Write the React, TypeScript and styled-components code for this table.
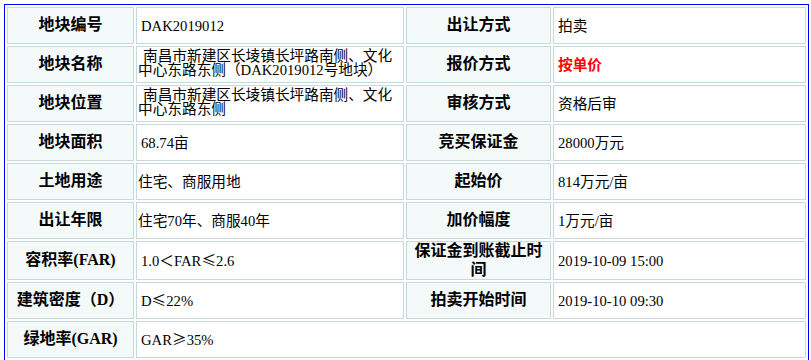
import React from "react";
import styled, { createGlobalStyle } from "styled-components";

const GlobalStyle = createGlobalStyle`
  html, body {
    margin: 0;
    padding: 0;
    background: #ffffff;
  }
  body {
    font-family: "Liberation Serif", "Noto Sans CJK SC", serif;
    color: #000000;
  }
`;

const Page = styled.div`
  padding: 4px;
`;

const Sheet = styled.div`
  box-sizing: border-box;
  width: 805px;
  display: grid;
  grid-template-columns: 127px 268px 145px 253px;
  grid-auto-rows: minmax(37px, auto);
  gap: 2px;
  padding: 2px;
  border: 1px solid #0000ff;
  background: #ffffff;
`;

const Cell = styled.div`
  box-sizing: border-box;
  border: 1px solid #c6dada;
  display: flex;
  align-items: center;
  min-width: 0;
`;

const LabelCell = styled(Cell)`
  background: #f4fafa;
  justify-content: center;
  text-align: center;
  font-family: "Liberation Serif", "Noto Sans CJK SC", serif;
  font-weight: 700;
  font-size: 16px;
  line-height: 18.5px;
`;

const ValueCell = styled(Cell)<{ $span?: boolean; $right?: boolean; $indent?: number; $lift?: boolean }>`
  background: #ffffff;
  grid-column: ${(p) => (p.$span ? "span 3" : "auto")};
  padding: ${(p) => (p.$lift ? "0 0 3px" : "0")} ${(p) => (p.$right ? "4px" : "1px")};
  font-size: 14.67px;
  line-height: 14px;
  text-indent: ${(p) => p.$indent ?? 0}px;
  font-family: "Liberation Serif", "Noto Sans CJK SC", serif;
`;

const Accent = styled.span`
  color: #ff0000;
  font-weight: 700;
`;

const Sym = styled.span`
  font-family: "Noto Sans CJK SC", sans-serif;
`;

type Row = {
  label: string;
  value: React.ReactNode;
  indent?: number;
  lift?: boolean;
  label2?: string;
  value2?: React.ReactNode;
};

const rows: Row[] = [
  { label: "地块编号", value: "DAK2019012", indent: 3, label2: "出让方式", value2: "拍卖" },
  {
    label: "地块名称",
    value: "南昌市新建区长堎镇长坪路南侧、文化中心东路东侧（DAK2019012号地块）",
    indent: 5,
    lift: true,
    label2: "报价方式",
    value2: <Accent>按单价</Accent>,
  },
  {
    label: "地块位置",
    value: "南昌市新建区长堎镇长坪路南侧、文化中心东路东侧",
    indent: 5,
    lift: true,
    label2: "审核方式",
    value2: "资格后审",
  },
  { label: "地块面积", value: "68.74亩", indent: 3, label2: "竞买保证金", value2: "28000万元" },
  { label: "土地用途", value: "住宅、商服用地", label2: "起始价", value2: "814万元/亩" },
  { label: "出让年限", value: "住宅70年、商服40年", label2: "加价幅度", value2: "1万元/亩" },
  {
    label: "容积率(FAR)",
    value: (
      <>
        1.0＜FAR<Sym>≤</Sym>2.6
      </>
    ),
    indent: 3,
    label2: "保证金到账截止时间",
    value2: "2019-10-09 15:00",
  },
  {
    label: "建筑密度（D）",
    value: (
      <>
        D<Sym>≤</Sym>22%
      </>
    ),
    indent: 3,
    label2: "拍卖开始时间",
    value2: "2019-10-10 09:30",
  },
  {
    label: "绿地率(GAR)",
    value: (
      <>
        GAR<Sym>≥</Sym>35%
      </>
    ),
    indent: 3,
  },
];

export default function App() {
  return (
    <>
      <GlobalStyle />
      <Page lang="zh-CN">
        <Sheet>
          {rows.map((r) => (
            <React.Fragment key={r.label}>
              <LabelCell>{r.label}</LabelCell>
              <ValueCell $span={!r.label2} $indent={r.indent} $lift={r.lift}>
                <span>{r.value}</span>
              </ValueCell>
              {r.label2 && <LabelCell>{r.label2}</LabelCell>}
              {r.label2 && (
                <ValueCell $right>
                  <span>{r.value2}</span>
                </ValueCell>
              )}
            </React.Fragment>
          ))}
        </Sheet>
      </Page>
    </>
  );
}
